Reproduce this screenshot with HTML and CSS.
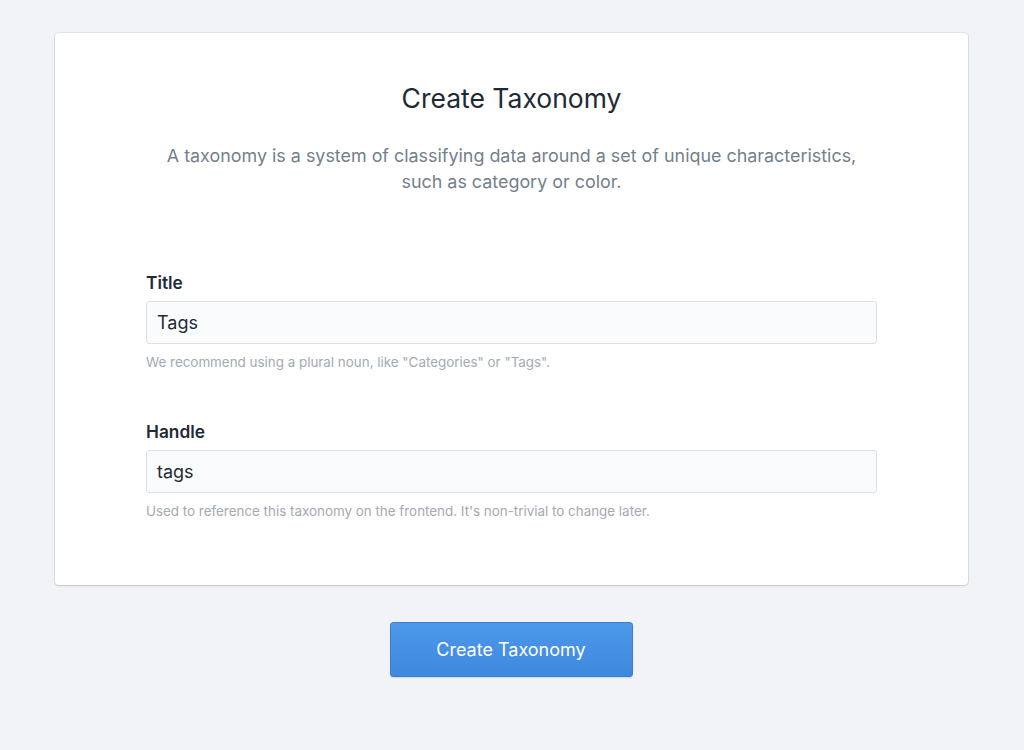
FILE: index.html
```html
<!DOCTYPE html>
<html>
<head>
<meta charset="utf-8">
<link rel="stylesheet" href="styles.css">
</head>
<body>
<main class="page">
  <section class="card">
    <h1 class="title">Create Taxonomy</h1>
    <p class="intro">A taxonomy is a system of classifying data around a set of unique characteristics, such as category or color.</p>
    <div class="field first">
      <label class="label">Title</label>
      <div class="input">Tags</div>
      <div class="help">We recommend using a plural noun, like "Categories" or "Tags".</div>
    </div>
    <div class="field">
      <label class="label">Handle</label>
      <div class="input">tags</div>
      <div class="help">Used to reference this taxonomy on the frontend. It's non-trivial to change later.</div>
    </div>
  </section>
  <div class="actions">
    <button class="btn">Create Taxonomy</button>
  </div>
</main>
</body>
</html>
```
FILE: styles.css
```css
* { box-sizing: border-box; }
html, body { margin: 0; padding: 0; }
body {
  background: #f1f3f6;
  font-family: Inter, "Noto Sans", sans-serif;
  color: #1f2933;
  width: 1024px;
  height: 750px;
  overflow: hidden;
}
.page {
  padding: 33px 56px 0 55px;
}
.card {
  background: #fff;
  border-radius: 4px;
  box-shadow: 0 0 0 1px rgba(40, 50, 60, 0.08), 0 1px 2px rgba(40, 50, 60, 0.15);
  padding: 49px 91px 63px;
  height: 552px;
}
.title {
  margin: 0;
  text-align: center;
  font-size: 26.5px;
  font-weight: 400;
  line-height: 32px;
  color: #1e2a35;
}
.intro {
  margin: 29px auto 0;
  max-width: 712px;
  text-align: center;
  font-size: 17.9px;
  line-height: 26px;
  color: #737f8c;
}
.field.first { margin-top: 76px; }
.field { margin-top: 49px; }
.label {
  display: block;
  font-size: 17.3px;
  font-weight: 600;
  line-height: 24px;
  color: #1e2a35;
}
.input {
  margin-top: 6px;
  height: 43px;
  border: 1px solid #dde1e6;
  border-radius: 3px;
  background: #fafbfc;
  padding: 0 10px;
  font-size: 18px;
  line-height: 41px;
  color: #1e2a35;
}
.help {
  margin-top: 9px;
  font-size: 13.4px;
  line-height: 18px;
  color: #a2aab3;
}
.actions {
  display: flex;
  justify-content: center;
  padding-top: 37px;
  padding-right: 1px;
}
.btn {
  width: 243px;
  height: 55px;
  border: 1px solid #3a7fd0;
  border-radius: 3px;
  background: linear-gradient(#4c98ea, #3f88df);
  color: #fff;
  font-family: Inter, "Noto Sans", sans-serif;
  font-size: 18px;
  font-weight: 400;
  box-shadow: 0 1px 1px rgba(30, 60, 100, 0.15);
}
```
